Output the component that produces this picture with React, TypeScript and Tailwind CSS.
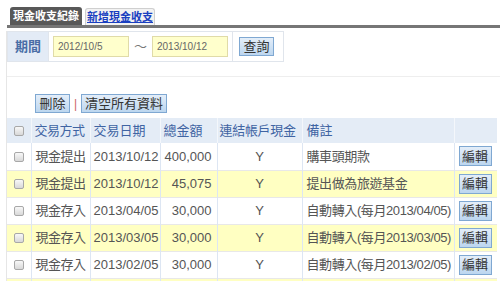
import React from "react";

type Row = {
  kind: string;
  date: string;
  amount: string;
  linked: string;
  note: string;
};

const ROWS: Row[] = [
  { kind: "現金提出", date: "2013/10/12", amount: "400,000", linked: "Y", note: "購車頭期款" },
  { kind: "現金提出", date: "2013/10/12", amount: "45,075", linked: "Y", note: "提出做為旅遊基金" },
  { kind: "現金存入", date: "2013/04/05", amount: "30,000", linked: "Y", note: "自動轉入(每月2013/04/05)" },
  { kind: "現金存入", date: "2013/03/05", amount: "30,000", linked: "Y", note: "自動轉入(每月2013/03/05)" },
  { kind: "現金存入", date: "2013/02/05", amount: "30,000", linked: "Y", note: "自動轉入(每月2013/02/05)" },
  { kind: "現金存入", date: "2013/01/05", amount: "30,000", linked: "Y", note: "自動轉入(每月2013/01/05)" },
];

const FONT = "font-['Liberation_Sans','Noto_Sans_CJK_TC',sans-serif]";

function Btn({ children, className = "" }: { children: React.ReactNode; className?: string }) {
  return (
    <button
      className={`h-[19px] px-0 flex items-center justify-center whitespace-nowrap border border-[#7fa8d2] bg-gradient-to-b from-[#e4eef9] to-[#bcd6ef] text-[13px] leading-none text-[#333] ${className}`}
    >
      {children}
    </button>
  );
}

function Check() {
  return (
    <span className="inline-block w-[10px] h-[10px] border border-[#a8a8a8] rounded-[2px] bg-gradient-to-b from-[#f8f8f8] to-[#d8d8d8] align-middle" />
  );
}

export default function App() {
  return (
    <div className={`w-[500px] h-[281px] overflow-hidden bg-white ${FONT}`}>
      {/* Tabs */}
      <div className="pt-[7px] ml-[7px] pl-[3px] flex items-end gap-[3px] border-b-[3px] border-[#767676]">
        <div className="h-[18px] w-[72px] rounded-t-[3px] bg-[#585858] text-white text-[11px] font-bold leading-[18px] text-center whitespace-nowrap">
          現金收支紀錄
        </div>
        <div className="h-[17px] w-[70px] rounded-t-[3px] border border-b-0 border-[#cfcfcf] bg-[#f2f2f2] text-[#1a3fc0] underline text-[11px] font-bold leading-[16px] text-center whitespace-nowrap">
          新增現金收支
        </div>
      </div>

      <div className="ml-[6px] border-l border-[#e6e6e6] h-[260px]">
        {/* Period */}
        <div className="mt-[3px] w-[277px] h-[31px] border border-[#e0e5ec] flex">
          <div className="w-[41px] bg-[#e3ebf6] border-r border-[#e0e5ec] flex items-center justify-center text-[13px] font-bold text-[#4a6ea6]">
            期間
          </div>
          <div className="w-[184px] border-r border-[#e0e5ec] flex items-center pl-[4px]">
            <div className="w-[76px] h-[21px] border border-[#e0dba8] bg-[#ffffcc] text-[10px] leading-[19px] text-[#666] pl-[4px]">
              2012/10/5
            </div>
            <span className="w-[23px] text-center text-[13px] text-[#777]">～</span>
            <div className="w-[76px] h-[21px] border border-[#e0dba8] bg-[#ffffcc] text-[10px] leading-[19px] text-[#666] pl-[4px]">
              2013/10/12
            </div>
          </div>
          <div className="flex-1 flex items-center pl-[6px]">
            <Btn className="h-[18px] w-[35px]">查詢</Btn>
          </div>
        </div>

        <div className="h-[15px] border-b border-[#eeeeee]" />

        {/* Actions */}
        <div className="mt-[17px] pl-[28px] flex items-center gap-[4px]">
          <Btn className="w-[35px]">刪除</Btn>
          <span className="text-[12px] text-[#c66] leading-none">|</span>
          <Btn className="w-[86px]">清空所有資料</Btn>
        </div>

        {/* Table */}
        <table className="mt-[5px] w-[490px] border-collapse table-fixed text-[13px]">
          <colgroup>
            <col className="w-[24px]" />
            <col className="w-[59px]" />
            <col className="w-[70px]" />
            <col className="w-[57px]" />
            <col className="w-[85px]" />
            <col className="w-[152px]" />
            <col className="w-[43px]" />
          </colgroup>
          <thead>
            <tr className="h-[25px] bg-[#e4ecf6] text-[#3f64a3] text-left">
              <th className="font-normal text-center border-r border-[#f4f7fb]">
                <Check />
              </th>
              <th className="font-normal pl-[3px] border-r border-[#f4f7fb] whitespace-nowrap tracking-[-0.5px]">交易方式</th>
              <th className="font-normal pl-[3px] border-r border-[#f4f7fb] whitespace-nowrap">交易日期</th>
              <th className="font-normal pl-[3px] border-r border-[#f4f7fb] whitespace-nowrap">總金額</th>
              <th className="font-normal pl-[2px] border-r border-[#f4f7fb] whitespace-nowrap tracking-[-0.3px]">連結帳戶現金</th>
              <th className="font-normal pl-[4px] border-r border-[#f4f7fb] whitespace-nowrap">備註</th>
              <th className="font-normal" />
            </tr>
          </thead>
          <tbody className="text-[#555]">
            {ROWS.map((r, i) => (
              <tr
                key={i}
                className={`h-[27px] border-b border-[#e8e8e8] ${i % 2 === 1 ? "bg-[#ffffc2]" : "bg-white"}`}
              >
                <td className="text-center border-r border-[#dde6f3]">
                  <Check />
                </td>
                <td className="pl-[4px] border-r border-[#dde6f3] whitespace-nowrap tracking-[-0.5px]">{r.kind}</td>
                <td className="pl-[3px] border-r border-[#dde6f3] whitespace-nowrap">{r.date}</td>
                <td className="pr-[5px] text-right border-r border-[#dde6f3] whitespace-nowrap">{r.amount}</td>
                <td className="text-center border-r border-[#dde6f3]">{r.linked}</td>
                <td className="pl-[4px] border-r border-[#dde6f3] whitespace-nowrap overflow-hidden tracking-[-0.4px]">{r.note}</td>
                <td className="pl-[4px]">
                  <Btn className="w-[33px] h-[20px]">編輯</Btn>
                </td>
              </tr>
            ))}
          </tbody>
        </table>
      </div>
    </div>
  );
}
